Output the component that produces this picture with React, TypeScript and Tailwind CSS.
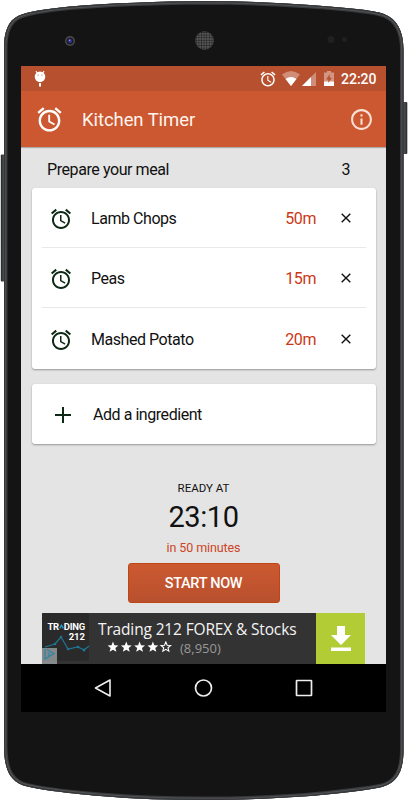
import React from "react";

const ALARM =
  "M22 5.72l-4.6-3.86-1.29 1.53 4.6 3.86L22 5.72zM7.88 3.39L6.6 1.86 2 5.71l1.29 1.53 4.59-3.85zM12.5 8H11v6l4.75 2.85.75-1.23-4-2.37V8zM12 4c-4.97 0-9 4.03-9 9s4.02 9 9 9c4.97 0 9-4.03 9-9s-4.03-9-9-9zm0 16c-3.87 0-7-3.13-7-7s3.13-7 7-7 7 3.13 7 7-3.13 7-7 7z";
const BODY =
  "M204 1C160 1.5 110 3 70 6.500C45 9 27 11.500 18 16C8 21 4 32 4 48V745C4 766 8 779 22 785C34 789 65 793 100 796C135 799 170 800 204 800C240 800 290 798 321 795C350 792 370 790 382 787C396 783 403.500 773 403.500 750V50C403.500 31 397 19 384 14C374 10 345 7.500 310 5C275 2.500 240 1 204 1Z";

function Alarm({ className }: { className: string }) {
  return (
    <svg viewBox="0 0 24 24" fill="currentColor" className={className}>
      <path d={ALARM} />
    </svg>
  );
}

function PhoneBody() {
  return (
    <svg viewBox="0 0 408 800" className="absolute inset-0 h-[800px] w-[408px]">
      <defs>
        <linearGradient id="key" x1="0" x2="1">
          <stop offset="0" stopColor="#202223" />
          <stop offset="0.5" stopColor="#4a4d4e" />
          <stop offset="1" stopColor="#242526" />
        </linearGradient>
        <clipPath id="body">
          <path d={BODY} />
        </clipPath>
        <pattern id="mesh" width="2.600" height="2.600" patternUnits="userSpaceOnUse">
          <rect width="2.600" height="2.600" fill="#5a5a5a" />
          <circle cx="1.300" cy="1.300" r="0.900" fill="#151515" />
        </pattern>
      </defs>
      <rect x="0.800" y="154.500" width="5" height="127" rx="1" fill="url(#key)" />
      <rect x="402" y="102" width="5.300" height="52" rx="1" fill="url(#key)" />
      <g clipPath="url(#body)">
        <path d={BODY} fill="#141414" stroke="#38393b" strokeWidth="7" />
        <path d={BODY} fill="none" stroke="#505254" strokeWidth="4.500" />
        <path d={BODY} fill="none" stroke="#363739" strokeWidth="2.400" />
      </g>
      <circle cx="70" cy="41" r="5" fill="#4c4b50" />
      <circle cx="70" cy="41" r="3.600" fill="#1d1d2b" />
      <circle cx="70" cy="41" r="1.900" fill="#34369a" />
      <circle cx="69.500" cy="40.300" r="0.700" fill="#9ba0dd" />
      <circle cx="204.500" cy="40.500" r="9.300" fill="url(#mesh)" />
      <circle cx="331" cy="39.500" r="3.500" fill="#202020" />
      <circle cx="344.500" cy="39.500" r="2.500" fill="#202020" />
    </svg>
  );
}

function StatusBar() {
  return (
    <div className="flex h-[25px] items-center bg-[#b7502f] text-white">
      <svg viewBox="0 0 12 17" className="ml-[13px] h-[17px] w-[12px]">
        <path d="M2 1L3.500 3.500M10 1L8.500 3.500" stroke="#fff" strokeWidth="1.100" />
        <ellipse cx="6" cy="6.700" rx="5.300" ry="5.200" fill="#fff" />
        <rect x="5" y="11" width="2" height="5.500" fill="#fff" />
        <rect x="5" y="12" width="2" height="1" fill="#b7502f" />
        <circle cx="4" cy="5" r=".6" fill="#b7502f" />
        <circle cx="8" cy="5" r=".6" fill="#b7502f" />
      </svg>
      <Alarm className="ml-[213px] h-[18px] w-[18px]" />
      <svg viewBox="0 0 18 15" className="ml-[5px] h-[15px] w-[18px]">
        <path d="M0 3.500Q9-3.500 18 3.500L9 15Z" fill="#fff" opacity=".35" />
        <path d="M3.500 8Q9 3.800 14.500 8L9 15Z" fill="#fff" />
      </svg>
      <svg viewBox="0 0 14 14" className="ml-[2px] h-[14px] w-[14px]">
        <path d="M0 14L14 0V14Z" fill="#fff" opacity=".35" />
        <path d="M0 14L9 5V14Z" fill="#fff" />
      </svg>
      <svg viewBox="0 0 10 15" className="ml-[8px] h-[15px] w-[10px]">
        <path d="M0 1.500H3V0H7V1.500H10V11H0Z" fill="#fff" opacity=".4" />
        <path d="M0 10.500H10V15H0Z" fill="#fff" />
        <path d="M6 3L2 8.500H4.500L4 12L8 6.800H5.500Z" fill="#b7502f" />
      </svg>
      <span className="ml-[7px] pt-[2px] text-[14px] leading-[23px] font-medium">22:20</span>
    </div>
  );
}

const items = [
  { name: "Lamb Chops", time: "50m" },
  { name: "Peas", time: "15m" },
  { name: "Mashed Potato", time: "20m" },
];

function Stars() {
  const star = "M6.500 0.500L8.100 4.500L12.400 4.800L9.100 7.600L10.200 11.800L6.500 9.500L2.800 11.800L3.900 7.600L0.600 4.800L4.900 4.500Z";
  return (
    <svg viewBox="0 0 66 12" className="h-[12px] w-[66px]" fill="#fff">
      {[0, 13.3, 26.6, 39.9].map((x) => (
        <path key={x} d={star} transform={`translate(${x} 0) scale(.92)`} />
      ))}
      <path d={star} transform="translate(53.500 .5) scale(.82)" fill="none" stroke="#fff" strokeWidth="1.300" />
    </svg>
  );
}

function Ad() {
  return (
    <div className="mt-[10px] ml-[21px] flex h-[51px] w-[323px] bg-[#333]">
      <div className="relative h-[48px] w-[47px] rounded-[3px] bg-[#2a2a2b]">
        <div className="flex flex-col items-end pt-[9px] pr-[4px] text-[9.5px] leading-[10px] font-bold tracking-[-0.25px] text-white">
          <div className="flex h-[10px] items-center">
            <span>TR</span>
            <svg viewBox="0 0 6 7" className="h-[7px] w-[5px]">
              <path d="M.8 4.500L3 .8L5.200 4.500" fill="none" stroke="#1ba5dc" strokeWidth="1.500" />
            </svg>
            <span>DING</span>
          </div>
          <div className="tracking-normal">212</div>
        </div>
        <svg viewBox="0 0 50 51" className="absolute top-0 left-0 h-[51px] w-[50px]">
          <path d="M3 34L13 31L19 24L26 36L36 34L42 37L47 33" fill="none" stroke="#1e7594" strokeWidth="1.200" />
          <g fill="#1e7594">
            <circle cx="13" cy="31" r="1.300" />
            <circle cx="19" cy="24" r="1.300" />
            <circle cx="26" cy="36" r="1.300" />
            <circle cx="36" cy="34" r="1.300" />
            <circle cx="42" cy="37" r="1.500" />
          </g>
          <rect y="35" width="15" height="16" fill="#a8adaf" opacity=".72" />
          <path d="M3 36V46L12 40.500L5 36.500M7 39.500V43" fill="none" stroke="#2388a6" strokeWidth="1.100" />
        </svg>
      </div>
      <div className="ml-[9px] w-[218px] text-[#f4f4f4] [font-family:'Open_Sans','Noto_Sans',sans-serif]">
        <div className="pt-[5px] text-[15.500px] leading-[22px] tracking-[-0.150px] whitespace-nowrap">Trading 212 FOREX &amp; Stocks</div>
        <div className="flex h-[13px] items-center pl-[9px]">
          <Stars />
          <span className="pt-[3px] pl-[7px] text-[13px] leading-[14px] text-[#999]">(8,950)</span>
        </div>
      </div>
      <div className="flex flex-1 items-center justify-center bg-[#b2cc35]">
        <svg viewBox="0 0 20 25" className="h-[25px] w-[20px]" fill="#fff">
          <path d="M6 0H14V9H20L10 19L0 9H6ZM0 21.500H20V25H0Z" />
        </svg>
      </div>
    </div>
  );
}

export default function App() {
  return (
    <div className="relative h-[800px] w-[408px] overflow-hidden bg-white pt-[66px] pl-[21px] text-[#111] [font-family:Roboto,sans-serif]">
      <PhoneBody />
      <div className="relative flex h-[646px] w-[365px] flex-col bg-[#e4e4e4]">
        <StatusBar />
        <header className="z-10 flex h-[56px] items-center bg-[#cb5830] text-white shadow-[0_1px_1px_rgba(0,0,0,0.25)]">
          <Alarm className="ml-[14px] h-[29px] w-[29px]" />
          <h1 className="ml-[18px] flex-1 pt-[2px] text-[18.500px] leading-[24px] tracking-[-0.080px] text-[#fff4ef]">Kitchen Timer</h1>
          <svg viewBox="0 0 24 24" className="mr-[12px] h-[25px] w-[25px]" fill="#fbdfd4">
            <path d="M11 17h2v-6h-2v6zm1-15C6.480 2 2 6.480 2 12s4.480 10 10 10 10-4.480 10-10S17.520 2 12 2zm0 18c-4.410 0-8-3.590-8-8s3.590-8 8-8 8 3.590 8 8-3.590 8-8 8zM11 9h2V7h-2v2z" />
          </svg>
        </header>
        <main className="h-[517px]">
          <div className="flex h-[41px] items-center justify-between pt-[4px] pr-[36px] pl-[26px] text-[16px] tracking-[-0.420px]">
            <span>Prepare your meal</span>
            <span>3</span>
          </div>
          <ul className="ml-[11px] w-[344px] rounded-[3px] bg-white px-[10px] shadow-[0_1px_2px_rgba(0,0,0,0.35)]">
            {items.map((item, i) => (
              <li
                key={item.name}
                className={
                  i < 2
                    ? "flex h-[60px] items-center border-b border-[#e8e8e8] text-[16px] tracking-[-0.450px]"
                    : "flex h-[61px] items-center text-[16px] tracking-[-0.450px]"
                }
              >
                <Alarm className="mt-[2px] ml-[7px] h-[24px] w-[24px] text-[#0d2814]" />
                <span className="ml-[18px] flex-1 pt-[3px]">{item.name}</span>
                <span className="pt-[3px] text-[#cc3816]">{item.time}</span>
                <svg viewBox="0 0 10 10" className="mr-[15px] ml-[25px] h-[10px] w-[10px]">
                  <path d="M.7.7L9.300 9.300M9.300.7L.7 9.300" stroke="#111" strokeWidth="1.400" />
                </svg>
              </li>
            ))}
          </ul>
          <button className="mt-[15px] ml-[11px] flex h-[60px] w-[344px] items-center rounded-[3px] bg-white text-[16px] tracking-[-0.450px] shadow-[0_1px_2px_rgba(0,0,0,0.35)]">
            <svg viewBox="0 0 16 16" className="mt-[2px] ml-[23px] h-[16px] w-[16px]">
              <path d="M0 8H16M8 0V16" stroke="#0d2814" strokeWidth="2" />
            </svg>
            <span className="ml-[22px] pt-px">Add a ingredient</span>
          </button>
          <section className="flex flex-col items-center pt-[37px]">
            <div className="text-[11.500px] leading-[14px]">READY AT</div>
            <div className="mt-[4px] text-[29px] leading-[36px] tracking-[-0.400px]">23:10</div>
            <div className="mt-[6px] text-[12.500px] leading-[14px] tracking-[-0.100px] text-[#cc4425]">in 50 minutes</div>
            <button className="mt-[8px] h-[40px] w-[152px] rounded-[3px] border border-[#be4514] bg-gradient-to-b from-[#cc5930] to-[#b8502e] pt-[2px] text-[14.500px] font-medium tracking-[-0.300px] text-white">
              START NOW
            </button>
          </section>
          <Ad />
        </main>
        <nav className="flex h-[48px] items-center bg-black">
          <svg viewBox="0 0 18 20" className="ml-[73px] h-[20px] w-[18px]">
            <path d="M16 2V18L1.500 10Z" fill="none" stroke="#eee" strokeWidth="1.600" strokeLinejoin="round" />
          </svg>
          <svg viewBox="0 0 20 20" className="ml-[81px] h-[20px] w-[20px]">
            <circle cx="10.500" cy="10" r="8" fill="none" stroke="#eee" strokeWidth="1.700" />
          </svg>
          <svg viewBox="0 0 18 18" className="ml-[82px] h-[18px] w-[18px]">
            <rect x="1.500" y="1.500" width="15" height="15" rx=".5" fill="none" stroke="#eee" strokeWidth="1.700" />
          </svg>
        </nav>
      </div>
    </div>
  );
}
